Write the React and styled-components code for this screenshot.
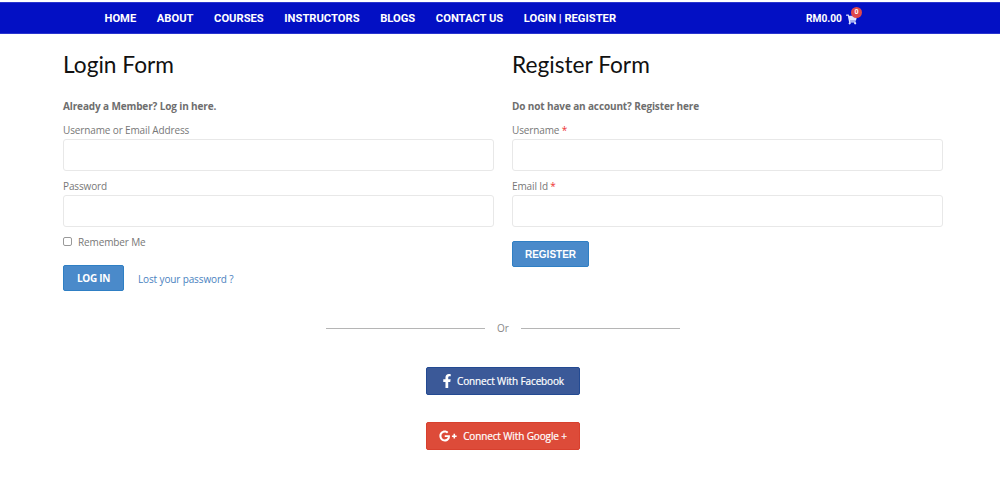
import React from 'react';
import styled, { createGlobalStyle } from 'styled-components';
import { FaFacebookF, FaGooglePlusG, FaShoppingCart } from 'react-icons/fa';

const GlobalStyle = createGlobalStyle`
  body {
    margin: 0;
    background: #fff;
    font-family: 'Open Sans', sans-serif;
  }
`;

const Nav = styled.div`
  margin-top: 2px;
  height: 32px;
  box-sizing: border-box;
  background: #0310c4;
  border-top: 1px solid #2a35cf;
  border-bottom: 1px solid #2a35cf;
  display: flex;
  align-items: center;
  padding-left: 104.5px;
  font-family: Roboto, sans-serif;
  font-weight: 700;
  font-size: 11.2px;
  color: #fff;
`;

const Menu = styled.div`
  display: flex;
  gap: 20.6px;
  width: 701.5px;
`;

const Cart = styled.div`
  display: flex;
  align-items: center;
  gap: 4px;
  font-size: 10.2px;
`;

const CartIcon = styled.span`
  position: relative;
  display: flex;
  margin-top: 2px;
  color: #dfe4ff;
`;

const Badge = styled.span`
  position: absolute;
  top: -7px;
  left: 5px;
  width: 11px;
  height: 11px;
  border-radius: 50%;
  background: #e0484a;
  color: #fff;
  font-size: 7px;
  line-height: 11px;
  text-align: center;
`;

const Columns = styled.div`
  display: flex;
  gap: 18px;
  padding: 0 57px 0 63px;
`;

const Column = styled.div`
  width: 431px;
`;

const Title = styled.h2`
  margin: 17px 0 0;
  font-family: Lato, sans-serif;
  font-weight: 400;
  font-size: 22.7px;
  line-height: 28px;
  color: #111;
`;

const Lead = styled.p`
  margin: 20px 0 9px;
  font-size: 10px;
  letter-spacing: -0.13px;
  line-height: 15px;
  font-weight: 700;
  color: #6e6e6e;
`;

const Label = styled.label`
  display: block;
  margin-top: 8px;
  font-size: 10px;
  letter-spacing: -0.13px;
  line-height: 15px;
  color: #777;
`;

const Star = styled.span`
  color: #e33;
`;

const Input = styled.input`
  display: block;
  box-sizing: border-box;
  width: 100%;
  height: 32px;
  margin-top: 1px;
  background: #fff;
  border: 1px solid #e8e8e8;
  border-radius: 3px;
  outline: none;
`;

const Remember = styled.label`
  display: flex;
  align-items: center;
  gap: 6px;
  margin-top: 7px;
  height: 15px;
  font-size: 10px;
  letter-spacing: -0.13px;
  color: #777;
`;

const Check = styled.span`
  box-sizing: border-box;
  width: 9px;
  height: 9px;
  border: 1px solid #999;
  border-radius: 2px;
`;

const Actions = styled.div`
  display: flex;
  align-items: center;
  gap: 14px;
  margin-top: 16px;
`;

const Button = styled.button`
  box-sizing: border-box;
  width: ${(p) => p.$width}px;
  height: 26px;
  padding: 0;
  margin-top: ${(p) => p.$top || 0}px;
  display: block;
  background: #4a8aca;
  border: 1px solid #2f7fc4;
  border-radius: 2px;
  color: #fff;
  font-family: ${(p) => p.$font};
  font-weight: 700;
  font-size: 10px;
  letter-spacing: ${(p) => p.$spacing || 0}px;
`;

const Forgot = styled.a`
  margin-top: 1px;
  font-size: 10px;
  letter-spacing: -0.13px;
  color: #4a82c0;
`;

const Social = styled.div`
  display: flex;
  flex-direction: column;
  align-items: center;
  width: 1006px;
`;

const Divider = styled.div`
  display: flex;
  align-items: center;
  gap: 12px;
  margin-top: 30px;
  font-size: 10px;
  color: #888;
`;

const Rule = styled.span`
  width: 159px;
  height: 1px;
  background: #b5b5b5;
`;

const SocialButton = styled.a`
  box-sizing: border-box;
  width: 154px;
  height: 28px;
  margin-top: ${(p) => p.$top}px;
  padding-right: ${(p) => p.$shift || 0}px;
  display: flex;
  align-items: center;
  justify-content: center;
  gap: ${(p) => p.$gap}px;
  background: ${(p) => p.$bg};
  border: 1px solid ${(p) => p.$edge};
  border-radius: 2px;
  color: #fff;
  font-size: 10px;
  letter-spacing: -0.13px;
  -webkit-text-stroke: 0.2px #fff;
`;

const items = ['HOME', 'ABOUT', 'COURSES', 'INSTRUCTORS', 'BLOGS', 'CONTACT US', 'LOGIN | REGISTER'];

export default function App() {
  return (
    <>
      <GlobalStyle />
      <Nav>
        <Menu>
          {items.map((item) => (
            <span key={item}>{item}</span>
          ))}
        </Menu>
        <Cart>
          RM0.00
          <CartIcon>
            <FaShoppingCart size={11} />
            <Badge>0</Badge>
          </CartIcon>
        </Cart>
      </Nav>
      <Columns>
        <Column>
          <Title>Login Form</Title>
          <Lead>Already a Member? Log in here.</Lead>
          <Label>Username or Email Address</Label>
          <Input />
          <Label>Password</Label>
          <Input type="password" />
          <Remember>
            <Check />
            Remember Me
          </Remember>
          <Actions>
            <Button $width={61} $spacing={-0.3} $font="'Open Sans', sans-serif">LOG IN</Button>
            <Forgot>Lost your password ?</Forgot>
          </Actions>
        </Column>
        <Column>
          <Title>Register Form</Title>
          <Lead>Do not have an account? Register here</Lead>
          <Label>
            Username <Star>*</Star>
          </Label>
          <Input />
          <Label>
            Email Id <Star>*</Star>
          </Label>
          <Input />
          <Button $width={77} $top={14} $font="'Liberation Sans', sans-serif">REGISTER</Button>
        </Column>
      </Columns>
      <Social>
        <Divider>
          <Rule />
          Or
          <Rule />
        </Divider>
        <SocialButton $top={32} $gap={3} $shift={2} $bg="#3b5998" $edge="#234a92">
          <FaFacebookF size={14} />
          Connect With Facebook
        </SocialButton>
        <SocialButton $top={27} $gap={6} $bg="#dd4b39" $edge="#d8402e">
          <FaGooglePlusG size={18} />
          Connect With Google +
        </SocialButton>
      </Social>
    </>
  );
}
